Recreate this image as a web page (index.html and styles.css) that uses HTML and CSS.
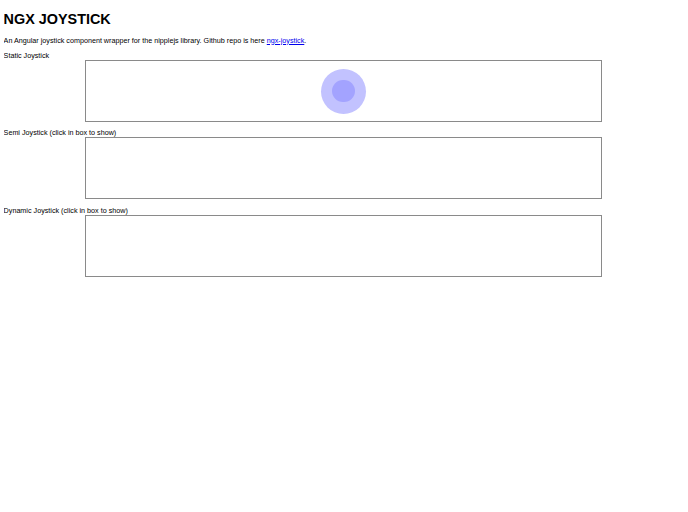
FILE: index.html
```html
<!DOCTYPE html>
<html>
<head>
<meta charset="utf-8">
<link rel="stylesheet" href="styles.css">
</head>
<body>
<h1 class="title">NGX JOYSTICK</h1>
<p class="intro">An Angular joystick component wrapper for the nipplejs library. Github repo is here <a href="#">ngx-joystick</a>.</p>
<div class="section">
  <div class="label">Static Joystick</div>
  <div class="zone zone-static">
    <div class="stick">
      <div class="front"></div>
    </div>
  </div>
</div>
<div class="section">
  <div class="label">Semi Joystick (click in box to show)</div>
  <div class="zone"></div>
</div>
<div class="section">
  <div class="label">Dynamic Joystick (click in box to show)</div>
  <div class="zone"></div>
</div>
</body>
</html>
```
FILE: styles.css
```css
html, body { background: #fff; }
body {
  margin: 3.6px;
  font-family: "Liberation Sans", Arial, sans-serif;
  font-size: 7.2px;
  color: #000;
}
.title {
  font-size: 14.4px;
  font-weight: bold;
  margin: 7.6px 0 8.4px;
}
.intro {
  margin: 7.2px 0;
}
.intro a { color: #0000ee; }
.label { line-height: 8.3px; }
.zone {
  margin-left: 81.4px;
  margin-bottom: 7.1px;
  width: 517px;
  height: 62px;
  box-sizing: border-box;
  border: 1px solid #8a8a8a;
}
.zone-static {
  display: flex;
  align-items: center;
  justify-content: center;
}
.stick {
  width: 45px;
  height: 45px;
  border-radius: 50%;
  background: #c2c2ff;
  display: flex;
  align-items: center;
  justify-content: center;
}
.front {
  width: 22.5px;
  height: 22.5px;
  border-radius: 50%;
  background: #a3a3ff;
}
```
